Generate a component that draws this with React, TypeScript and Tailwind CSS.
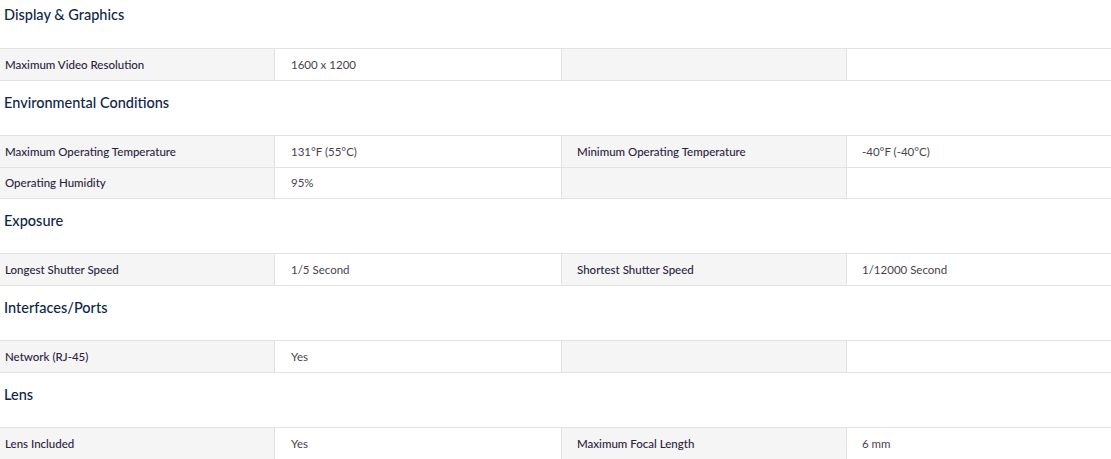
type Row = [string, string, string, string];

type Section = { title: string; rows: Row[] };

const sections: Section[] = [
  { title: "Display & Graphics", rows: [["Maximum Video Resolution", "1600 x 1200", "", ""]] },
  {
    title: "Environmental Conditions",
    rows: [
      ["Maximum Operating Temperature", "131°F (55°C)", "Minimum Operating Temperature", "-40°F (-40°C)"],
      ["Operating Humidity", "95%", "", ""],
    ],
  },
  {
    title: "Exposure",
    rows: [["Longest Shutter Speed", "1/5 Second", "Shortest Shutter Speed", "1/12000 Second"]],
  },
  { title: "Interfaces/Ports", rows: [["Network (RJ-45)", "Yes", "", ""]] },
  { title: "Lens", rows: [["Lens Included", "Yes", "Maximum Focal Length", "6 mm"]] },
];

const SpecSection = ({ section, first }: { section: Section; first: boolean }) => {
  return (
    <div>
      <h3
        className={`${first ? "h-[48px] pt-[5px]" : "h-[54px] pt-[12px]"} pl-[4px] text-[14.5px] leading-[20px] font-medium text-[#0d2647]`}
      >
        {section.title}
      </h3>
      <div className="border-t border-[#e2e2e2]">
        {section.rows.map((row, i) => (
          <div
            key={i}
            className={`${i === 0 ? "h-[32px]" : "h-[31px]"} grid grid-cols-[275px_287px_285px_1fr] border-b border-[#e2e2e2] text-[11.5px] leading-[14px]`}
          >
            <div className="bg-[#f5f5f5] border-r border-[#e2e2e2] pl-[5px] flex items-center font-medium text-[#2c2340]">
              {row[0]}
            </div>
            <div className="bg-white border-r border-[#e2e2e2] pl-[16px] flex items-center text-[#4a3f4d]">
              {row[1]}
            </div>
            <div className="bg-[#f5f5f5] border-r border-[#e2e2e2] pl-[15px] flex items-center font-medium text-[#2c2340]">
              {row[2]}
            </div>
            <div className="bg-white pl-[15px] flex items-center text-[#4a3f4d]">{row[3]}</div>
          </div>
        ))}
      </div>
    </div>
  );
};

export default function App() {
  return (
    <div className="w-[1111px] h-[459px] overflow-hidden bg-white font-['Lato','Noto_Sans',sans-serif]">
      {sections.map((s, i) => (
        <SpecSection key={s.title} section={s} first={i === 0} />
      ))}
    </div>
  );
}
